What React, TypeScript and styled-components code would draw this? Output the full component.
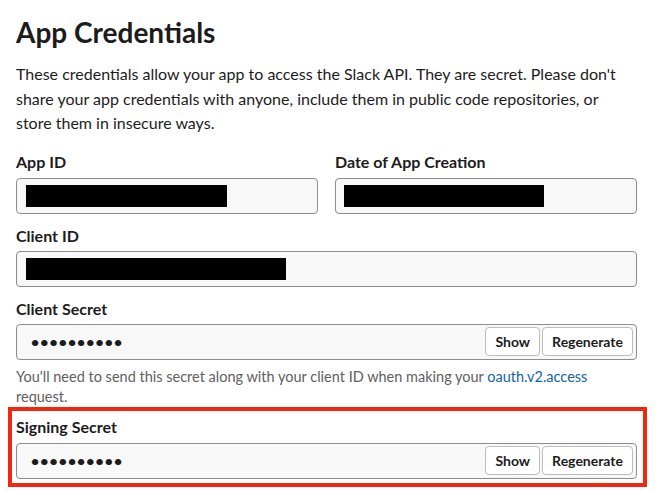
import React from "react";
import styled, { createGlobalStyle } from "styled-components";

const Global = createGlobalStyle`
  html, body { margin: 0; padding: 0; background: #fff; }
  body { font-family: Lato, "Noto Sans", "Liberation Sans", sans-serif; color: #1d1c1d; }
  * { box-sizing: border-box; }
`;

const Page = styled.div`
  padding: 12px 25px 0 16px;
  width: 662px;
`;

const Title = styled.h1`
  margin: 0;
  font-size: 28px;
  font-weight: 700;
  line-height: 40px;
`;

const Intro = styled.p`
  margin: 10px 0 14px;
  font-size: 16px;
  line-height: 24.5px;
`;

const Row = styled.div`
  display: grid;
  grid-template-columns: 1fr 1fr;
  column-gap: 17px;
`;

const Field = styled.div`
  display: flex;
  flex-direction: column;
`;

const Label = styled.label<{ $first?: boolean }>`
  display: block;
  margin: ${(p) => (p.$first ? "2px 0 6px" : "12px 0 5px")};
  font-size: 16px;
  font-weight: 700;
  line-height: 20px;
`;

const Input = styled.div`
  height: 36px;
  display: flex;
  align-items: center;
  justify-content: space-between;
  padding: 0 3px 0 9px;
  background: #f8f8f8;
  border: 1px solid #8d8d8d;
  border-radius: 4px;
`;

const Redacted = styled.span<{ $w: number; $shift?: number }>`
  display: block;
  width: ${(p) => p.$w}px;
  height: 22px;
  margin-left: ${(p) => p.$shift ?? 0}px;
  background: #000;
`;

const Dots = styled.span`
  padding-left: 5px;
  font-size: 14px;
  font-weight: 900;
  letter-spacing: 1.1px;
  line-height: 20px;
`;

const Buttons = styled.div`
  display: flex;
  gap: 2px;
`;

const Button = styled.button`
  height: 29px;
  padding: 0 9px;
  background: #fff;
  border: 1px solid #bdbdbd;
  border-radius: 4px;
  font-family: inherit;
  font-size: 14px;
  font-weight: 700;
  color: #1d1c1d;
`;

const Help = styled.p`
  margin: 7px 0 0;
  font-size: 14.5px;
  line-height: 20px;
  color: #616061;
`;

const Link = styled.a`
  color: #1264a3;
  text-decoration: none;
`;

const Highlight = styled.div`
  margin: 0 -10px 0 -8px;
  padding: 4px 6px 4px 4px;
  border: 4px solid #f3260f;
`;

function SecretInput() {
  return (
    <Input>
      <Dots>••••••••••</Dots>
      <Buttons>
        <Button>Show</Button>
        <Button>Regenerate</Button>
      </Buttons>
    </Input>
  );
}

export default function App() {
  return (
    <>
      <Global />
      <Page>
        <Title>App Credentials</Title>
        <Intro>
          These credentials allow your app to access the Slack API. They are secret. Please don't
          share your app credentials with anyone, include them in public code repositories, or
          store them in insecure ways.
        </Intro>
        <Row>
          <Field>
            <Label $first>App ID</Label>
            <Input>
              <Redacted $w={201} />
            </Input>
          </Field>
          <Field>
            <Label $first>Date of App Creation</Label>
            <Input>
              <Redacted $w={200} $shift={-1} />
            </Input>
          </Field>
        </Row>
        <Field>
          <Label>Client ID</Label>
          <Input>
            <Redacted $w={260} />
          </Input>
        </Field>
        <Field>
          <Label>Client Secret</Label>
          <SecretInput />
          <Help>
            You'll need to send this secret along with your client ID when making your{" "}
            <Link href="#">oauth.v2.access</Link> request.
          </Help>
        </Field>
        <Highlight>
          <Field>
            <Label $first>Signing Secret</Label>
            <SecretInput />
          </Field>
        </Highlight>
        <Help>
          Slack signs the requests we send you using this secret. Confirm that each request comes
          from Slack by verifying its unique signature.
        </Help>
      </Page>
    </>
  );
}
